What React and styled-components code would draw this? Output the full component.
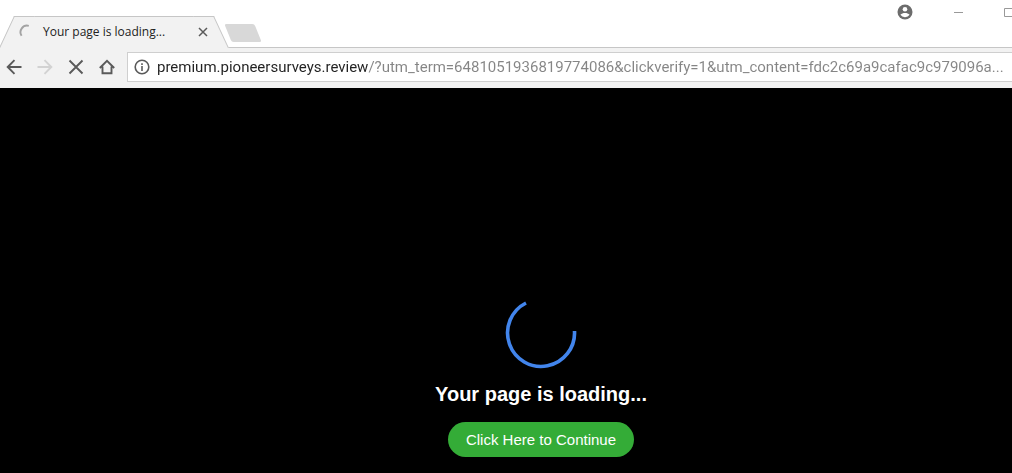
import React, { Component } from 'react'
import styled, { createGlobalStyle } from 'styled-components'

const GlobalStyle = createGlobalStyle`
  * {
    box-sizing: border-box;
  }
  body {
    margin: 0;
    background: #000;
    overflow: hidden;
  }
`

const Window = styled.div`
  min-height: 100vh;
  display: flex;
  flex-direction: column;
  overflow: hidden;
  font-family: "Open Sans", "Noto Sans", sans-serif;
`

const TabStrip = styled.header`
  display: flex;
  align-items: flex-end;
  padding-left: 14px;
  background: #fff;
`

const Tab = styled.div`
  position: relative;
  z-index: 1;
  display: flex;
  align-items: center;
  width: 200px;
  height: 32px;
  margin-top: 16px;
  margin-bottom: -1px;
  padding: 0 3px 2px 5px;
  background: #f2f2f2;
  border-top: 1px solid #c6c6c6;
  &::before,
  &::after {
    content: "";
    position: absolute;
    z-index: -1;
    top: -1px;
    bottom: 0;
    width: 20px;
    background: #f2f2f2;
    border-top: 1px solid #c6c6c6;
  }
  &::before {
    left: 0;
    border-left: 1px solid #c6c6c6;
    transform: skewX(-25deg);
    transform-origin: top left;
  }
  &::after {
    right: 0;
    border-right: 1px solid #c6c6c6;
    transform: skewX(25deg);
    transform-origin: top right;
  }
`

const TabTitle = styled.span`
  flex: 1;
  margin-left: 8px;
  font-size: 12px;
  line-height: 16px;
  color: #222;
  white-space: nowrap;
`

const PlainButton = styled.button`
  display: flex;
  align-items: center;
  justify-content: center;
  flex: none;
  padding: 0;
  border: 0;
  background: transparent;
  color: ${props => props.$color || '#5a5a5a'};
`

const TabClose = styled(PlainButton)`
  width: 16px;
  height: 16px;
`

const NewTab = styled.button`
  width: 30px;
  height: 18px;
  margin: 0 0 5px 14px;
  padding: 0;
  border: 0;
  border-radius: 2px;
  background: #d8d8d8;
  transform: skewX(22deg);
`

const WindowControls = styled.div`
  display: flex;
  align-self: flex-start;
  margin-left: auto;
  margin-right: -22px;
`

const WindowButton = styled(PlainButton)`
  width: ${props => props.$width || 50}px;
  height: 24px;
`

const Toolbar = styled.nav`
  display: flex;
  align-items: center;
  height: 41px;
  padding: 0 0 2px 4px;
  background: #f2f2f2;
  border-top: 1px solid #c6c6c6;
`

const NavButtons = styled.div`
  display: flex;
  gap: 10px;
`

const NavButton = styled(PlainButton)`
  width: 20px;
  height: 24px;
  &:not(:first-child) {
    width: 21px;
  }
`

const AddressBar = styled.label`
  flex: 1;
  display: flex;
  align-items: center;
  gap: 7px;
  height: 30px;
  min-width: 0;
  margin-left: 10px;
  padding-left: 6px;
  background: #fff;
  border: 1px solid #cfcfcf;
  border-right: 0;
  color: #5a5a5a;
`

// the host is dark and the rest of the address is grey
const Address = styled.input`
  flex: 1;
  min-width: 0;
  height: 28px;
  padding: 0;
  border: 0;
  outline: 0;
  font-family: Roboto, "Open Sans", sans-serif;
  font-size: 15px;
  text-overflow: ellipsis;
  color: transparent;
  caret-color: #222;
  background: linear-gradient(90deg, #222 ${props => props.$host}px, #858585 ${props => props.$host}px);
  background-clip: text;
  -webkit-background-clip: text;
`

const Page = styled.main`
  flex: 1;
  display: flex;
  flex-direction: column;
  align-items: center;
  padding: 209px 0 16px 70px;
  background: #000;
  font-family: "Liberation Sans", Arial, sans-serif;
`

const Heading = styled.h1`
  margin: 13px 0 16px;
  font-size: 20px;
  line-height: 24px;
  font-weight: 700;
  color: #fff;
`

const ContinueButton = styled.button`
  height: 35px;
  padding: 0 18px;
  border: 0;
  border-radius: 18px;
  background: #34ac37;
  color: #fff;
  font-family: inherit;
  font-size: 15px;
`

const Icon = ({ size = 16, width = 1.9, children }) => (
  <svg width={size} height={size} viewBox={`0 0 ${size} ${size}`} fill="none" stroke="currentColor" strokeWidth={width} aria-hidden="true">
    {children}
  </svg>
)

export default class App extends Component {
  state = {
    title: 'Your page is loading...',
    url: 'premium.pioneersurveys.review/?utm_term=6481051936819774086&clickverify=1&utm_content=fdc2c69a9cafac9c979096a...',
  }

  handleChange = (event) => {
    this.setState({ url: event.target.value })
  }

  render() {
    return (
      <Window>
        <GlobalStyle />
        <TabStrip>
          <Tab>
            <Icon><path d="M2.6 11.8A6.6 6.6 0 0 1 9.8 1.8" stroke="#a3a3a3" /></Icon>
            <TabTitle>{this.state.title}</TabTitle>
            <TabClose aria-label="Close tab">
              <Icon size={10} width={1.5}><path d="M1 1l8 8M9 1L1 9" /></Icon>
            </TabClose>
          </Tab>
          <NewTab aria-label="New tab" />
          <WindowControls>
            <WindowButton aria-label="Account" $width={58} $color="#6c6c6c">
              <Icon>
                <circle cx="8" cy="8" r="7.5" fill="currentColor" stroke="none" />
                <circle cx="8" cy="5.2" r="2.3" fill="#fff" stroke="none" />
                <path d="M3.4 10.8C4.4 9.4 6.4 8.9 8 8.9s3.6.5 4.6 1.9A5.5 5.5 0 0 1 8 13.2a5.5 5.5 0 0 1-4.6-2.4z" fill="#fff" stroke="none" />
              </Icon>
            </WindowButton>
            <WindowButton aria-label="Minimize" $color="#999">
              <Icon size={10} width={1}><path d="M0 5.5h9" /></Icon>
            </WindowButton>
            <WindowButton aria-label="Maximize" $color="#999">
              <Icon size={10} width={1}><path d="M.5 1.5h9v8h-9z" /></Icon>
            </WindowButton>
          </WindowControls>
        </TabStrip>
        <Toolbar>
          <NavButtons>
            <NavButton aria-label="Back">
              <Icon><path d="M15.5 8H2M8.5 1.2L1.7 8l6.8 6.8" /></Icon>
            </NavButton>
            <NavButton aria-label="Forward" $color="#d2d2d2" disabled>
              <Icon><path d="M.5 8H14M7.5 1.2L14.3 8l-6.8 6.8" /></Icon>
            </NavButton>
            <NavButton aria-label="Stop">
              <Icon><path d="M1.5 1.5l13 13M14.5 1.5l-13 13" /></Icon>
            </NavButton>
            <NavButton aria-label="Home">
              <Icon><path d="M.8 9L8 1.8 15.2 9M3.5 7.5v6.8h9V7.5" /></Icon>
            </NavButton>
          </NavButtons>
          <AddressBar>
            <Icon width={1.6}>
              <circle cx="8" cy="8" r="6.8" />
              <path d="M8 7v5M8 4.2v1.7" />
            </Icon>
            <Address aria-label="Address" $host={211} value={this.state.url} onChange={this.handleChange} />
          </AddressBar>
        </Toolbar>
        <Page>
          <svg width="72" height="72" viewBox="0 0 72 72" fill="none" role="img" aria-label="Loading">
            <path d="M21 6A33.5 33.5 0 1 0 69.5 34" stroke="#4285ec" strokeWidth="3.6" />
          </svg>
          <Heading>{this.state.title}</Heading>
          <ContinueButton>Click Here to Continue</ContinueButton>
        </Page>
      </Window>
    )
  }
}
